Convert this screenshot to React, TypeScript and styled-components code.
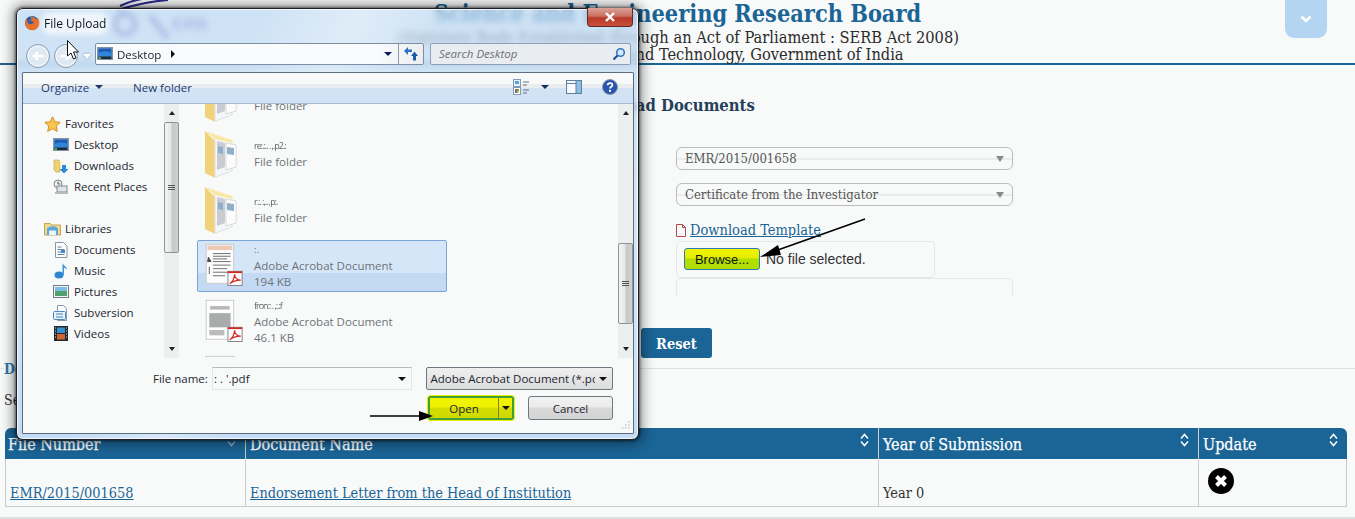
import React from "react";
import styled, { createGlobalStyle } from "styled-components";

const SLAB = `"DejaVu Serif Condensed", "DejaVu Serif", "Liberation Serif", serif`;
const UI = `"Open Sans", "Noto Sans", sans-serif`;
const BLUE = "#1a6496";

const Global = createGlobalStyle`
  html, body { margin: 0; padding: 0; height: 519px; overflow: hidden; background: #f8faf9; }
  * { box-sizing: border-box; }
`;

const Page = styled.div`
  position: relative;
  width: 1355px;
  height: 519px;
  overflow: hidden;
  background: #f8faf9;
  font-family: ${SLAB};
  color: #333;
  border-bottom: 2px solid #dcdfdf;
`;

/* ---------- page header ---------- */
const Header = styled.header`
  height: 65px;
  border-bottom: 2px solid ${BLUE};
  display: grid;
  grid-template-columns: 1fr 600px 1fr;
`;
const LogoSlot = styled.div`
  padding: 0 0 0 112px;
`;
const TitleBlock = styled.div`
  text-align: center;
  white-space: nowrap;
`;
const Title = styled.h1`
  margin: 0;
  font-size: 23.3px;
  line-height: 28px;
  font-weight: 700;
  color: ${BLUE};
`;
const SubLine = styled.div`
  font-size: 16.3px;
  line-height: 17px;
  color: #2b2b2b;
  &:first-of-type { margin-top: 1px; }
`;
const HeaderEnd = styled.div`
  display: flex;
  justify-content: flex-end;
  padding-right: 28px;
`;
const MenuToggle = styled.button`
  width: 42px;
  height: 38px;
  border: 0;
  padding: 0;
  border-radius: 0 0 9px 9px;
  background: #b3d5f2;
  color: #fff;
  display: flex;
  align-items: center;
  justify-content: center;
`;

/* ---------- upload form ---------- */
const UploadSection = styled.section`
  height: 303px;
  padding: 30px 0 0 597px;
`;
const SectionTitle = styled.h2`
  margin: 0;
  font-size: 16.5px;
  line-height: 22px;
  font-weight: 700;
  color: #24405a;
`;
const Fields = styled.div`
  margin: 30px 0 0 79px;
  width: 337px;
  display: flex;
  flex-direction: column;
`;
const FakeSelect = styled.div`
  height: 23px;
  margin-bottom: 13px;
  border: 1px solid #b9bdbd;
  border-radius: 6px;
  padding: 0 8px;
  display: flex;
  align-items: center;
  justify-content: space-between;
  font-size: 13px;
  color: #555;
  background: linear-gradient(to bottom, transparent 10px, #ebeded 10px, #ebeded 12px, transparent 12px);
`;
const Caret = styled.span`
  width: 0;
  height: 0;
  border-left: 4px solid transparent;
  border-right: 4px solid transparent;
  border-top: 6px solid #8a8a8a;
`;
const TemplateRow = styled.div`
  height: 22px;
  display: flex;
  align-items: center;
  gap: 4px;
`;
const TemplateLink = styled.a`
  font-size: 14.5px;
  color: ${BLUE};
  text-decoration: underline;
`;
const FileBox = styled.div`
  width: 259px;
  height: 37px;
  border: 1px solid #e6e8e8;
  border-radius: 5px;
  padding: 0 7px 1px;
  display: flex;
  align-items: center;
  gap: 6px;
  font-family: "Liberation Sans", sans-serif;
  font-size: 14px;
  color: #333;
`;
const BrowseButton = styled.button`
  width: 76px;
  height: 22px;
  padding: 0;
  border: 1px solid #2f7cb5;
  border-radius: 3px;
  background: linear-gradient(to bottom, #f0f300 0, #e3ee00 45%, #b2df00 50%, #b0de00 100%);
  font-family: "Liberation Sans", sans-serif;
  font-size: 13px;
  color: #111;
`;
const ClippedBox = styled.div`
  height: 17px;
  border: 1px solid #e6e8e8;
  border-bottom: 0;
  border-radius: 5px 5px 0 0;
`;
const ButtonRow = styled.div`
  margin: 33px 0 0 44px;
`;
const ResetButton = styled.button`
  width: 71px;
  height: 30px;
  border: 0;
  border-radius: 3px;
  background: ${BLUE};
  color: #fff;
  font-family: ${SLAB};
  font-weight: 700;
  font-size: 14.5px;
`;

/* ---------- documents ---------- */
const DocsSection = styled.section`
  border-top: 1px solid #dfe2e2;
`;
const Legend = styled.h3`
  margin: -8px 0 0 4px;
  padding: 0;
  width: max-content;
  background: #f8faf9;
  font-size: 14px;
  line-height: 16px;
  font-weight: 700;
  color: #2f78b0;
`;
const Hint = styled.p`
  margin: 15px 0 0 4px;
  font-size: 14px;
  line-height: 16px;
  color: #333;
`;
const DocTable = styled.table`
  margin: 20px 0 0 5px;
  width: 1342px;
  border-collapse: separate;
  border-spacing: 0;
  table-layout: fixed;
  font-size: 14.4px;
`;
const Th = styled.th<{ $w: number }>`
  width: ${(p) => p.$w}px;
  height: 31px;
  padding: 1px 5px 0 4px;
  background: ${BLUE};
  color: #fff;
  text-align: left;
  font-weight: 400;
  font-size: 16px;
  -webkit-text-stroke: 0.25px #fff;
  position: relative;
  border-left: 1px solid #c9cccc;
  &:first-child { border-left: 0; border-radius: 6px 0 0 0; padding-left: 3px; }
  &:last-child { border-radius: 0 6px 0 0; }
`;
const SortMark = styled.span`
  position: absolute;
  top: 5px;
  right: 9px;
  display: flex;
`;
const Td = styled.td`
  height: 48px;
  padding: 26px 4px 0;
  vertical-align: top;
  border-left: 1px solid #c9cccc;
  border-bottom: 1px solid #c9cccc;
  &:last-child { border-right: 1px solid #c9cccc; padding: 9px 0 0 9px; }
  a { color: ${BLUE}; text-decoration: underline; }
`;

/* ---------- file dialog ---------- */
const Dialog = styled.div`
  position: absolute;
  left: 16px;
  top: 8px;
  width: 623px;
  height: 432px;
  display: flex;
  flex-direction: column;
  border: 1px solid #1c2026;
  border-radius: 7px;
  font-family: ${UI};
  font-size: 11.5px;
  color: #1c2530;
  backdrop-filter: blur(3px);
  background:
    linear-gradient(115deg, rgba(255,255,255,0) 30%, rgba(255,255,255,.35) 42%, rgba(255,255,255,0) 52%),
    linear-gradient(to bottom, rgba(190,217,243,.72), rgba(205,226,247,.85) 60%, #c3dcf5);
  box-shadow: 0 0 3px 1px rgba(0,0,0,.55), 0 0 12px 4px rgba(0,0,0,.38), inset 0 0 0 1px rgba(255,255,255,.75);
`;
const TitleBar = styled.div`
  height: 32px;
  flex: none;
  padding: 0 5px 0 7px;
  display: flex;
  align-items: flex-start;
`;
const TitleIcon = styled.span`
  margin-top: 6px;
  display: flex;
`;
const TitleText = styled.span`
  margin: 6px 0 0 4px;
  font-size: 12px;
  line-height: 17px;
  color: #10161d;
  background: rgba(255,255,255,.65);
  box-shadow: 0 0 5px 3px rgba(255,255,255,.65);
  border-radius: 8px;
`;
const CloseButton = styled.span`
  margin: -1px 0 0 auto;
  width: 46px;
  height: 19px;
  border: 1px solid #5d2b26;
  border-top: 0;
  border-radius: 0 0 4px 4px;
  background: linear-gradient(to bottom, #dba298 0, #c9705f 45%, #b93a28 55%, #c8503a 100%);
  display: flex;
  align-items: center;
  justify-content: center;
`;
const NavBar = styled.div`
  height: 31px;
  flex: none;
  padding: 2px 7px 0 9px;
  display: flex;
  align-items: flex-start;
`;
const RoundNav = styled.span`
  display: flex;
  margin-right: 4px;
`;
const HistoryCaret = styled.span`
  margin: 11px 4px 0 1px;
  width: 0;
  height: 0;
  border-left: 4px solid transparent;
  border-right: 4px solid transparent;
  border-top: 5px solid #fff;
  filter: drop-shadow(0 0 1px #8095ae);
`;
const AddressBox = styled.div`
  width: 329px;
  height: 22px;
  border: 1px solid #7c8fa6;
  border-radius: 2px;
  background: linear-gradient(to right, #fafbfc 0, #fafbfc 85%, #eceef0 100%);
  display: flex;
  align-items: center;
  padding-left: 1px;
  color: #16202c;
`;
const AddressLabel = styled.span`
  margin: 0 0 0 4px;
`;
const Crumb = styled.span`
  margin-left: 10px;
  width: 0;
  height: 0;
  border-top: 4px solid transparent;
  border-bottom: 4px solid transparent;
  border-left: 4px solid #111;
`;
const AddressEnd = styled.span`
  margin-left: auto;
  height: 100%;
  display: flex;
  align-items: center;
`;
const DownCaret = styled.span<{ $c?: string }>`
  width: 0;
  height: 0;
  border-left: 4px solid transparent;
  border-right: 4px solid transparent;
  border-top: 4px solid ${(p) => p.$c || "#0a1c5c"};
`;
const RefreshCell = styled.span`
  margin-left: 6px;
  width: 25px;
  height: 100%;
  border-left: 1px solid #8a9bb0;
  display: flex;
  align-items: center;
  justify-content: center;
`;
const SearchBox = styled.div`
  width: 201px;
  height: 22px;
  margin-left: 6px;
  border: 1px solid #8da0b7;
  border-radius: 2px;
  background: #e9edf1;
  display: flex;
  align-items: center;
  justify-content: space-between;
  padding: 0 4px 1px 8px;
  font-style: italic;
  color: #6b7178;
`;
const Panel = styled.div`
  flex: 1;
  min-height: 0;
  margin: 0 4px 5px 5px;
  border: 1px solid #5d6d80;
  border-radius: 1px;
  background: #f8faf9;
  display: flex;
  flex-direction: column;
  position: relative;
`;
const Toolbar = styled.div`
  height: 31px;
  flex: none;
  padding: 0 15px 2px 18px;
  display: flex;
  align-items: center;
  color: #1d3a6c;
  border-bottom: 1px solid #a8b8d0;
  background: linear-gradient(to bottom, #f8faf9 0, #f8faf9 11px, #e9edf0 11px, #e9edf0 15px, #d2e3f6 15px);
`;
const OrganizeLabel = styled.span`
  display: flex;
  align-items: center;
  gap: 6px;
  margin-right: 30px;
`;
const ToolIcons = styled.span`
  margin-left: auto;
  display: flex;
  align-items: center;
`;
const ToolGap = styled.span<{ $w: number }>`
  width: ${(p) => p.$w}px;
  flex: none;
`;
const Panes = styled.div`
  height: 254px;
  flex: none;
  display: flex;
`;
const NavPane = styled.div`
  width: 141px;
  flex: none;
  padding-top: 9px;
  overflow: hidden;
`;
const NavGroup = styled.div<{ $spaced?: boolean }>`
  height: 21px;
  margin-top: ${(p) => (p.$spaced ? "21px" : "0")};
  padding-left: 20px;
  display: flex;
  align-items: center;
  gap: 4px;
`;
const NavItem = styled.div`
  height: 21px;
  padding-left: 29px;
  display: flex;
  align-items: center;
  gap: 4px;
`;
const Scrollbar = styled.div`
  width: 15px;
  flex: none;
  background: #ecefef;
  position: relative;
  display: flex;
  flex-direction: column;
  align-items: center;
`;
const ScrollCap = styled.span<{ $down?: boolean }>`
  height: 18px;
  flex: none;
  display: flex;
  align-items: center;
  &::after {
    content: "";
    width: 0;
    height: 0;
    border-left: 3.5px solid transparent;
    border-right: 3.5px solid transparent;
    ${(p) => (p.$down ? "border-top: 4px solid #222;" : "border-bottom: 4px solid #222;")}
  }
`;
const ScrollTrack = styled.span`
  flex: 1;
  width: 100%;
  position: relative;
`;
const ScrollThumb = styled.span<{ $top: number; $h: number }>`
  position: absolute;
  left: 0;
  top: ${(p) => p.$top}px;
  height: ${(p) => p.$h}px;
  width: 15px;
  border: 1px solid #8f9497;
  border-radius: 2px;
  background: linear-gradient(to right, #f3f4f4, #e6e7e7 45%, #c6c9c8 55%, #cfd1d0);
  display: flex;
  flex-direction: column;
  align-items: center;
  justify-content: center;
  gap: 1px;
  i { width: 7px; height: 1px; background: #555; }
`;
const FilePane = styled.div`
  flex: 1;
  min-width: 0;
  padding-left: 18px;
  overflow: hidden;
`;
const FileList = styled.div`
  margin-top: -32px;
  display: flex;
  flex-direction: column;
  gap: 4px;
`;
const FileRow = styled.div<{ $sel?: boolean }>`
  width: 250px;
  height: 52px;
  flex: none;
  display: flex;
  align-items: center;
  padding-left: 6px;
  gap: 11px;
  border: 1px solid ${(p) => (p.$sel ? "#78a6d6" : "transparent")};
  border-radius: 2px;
  background: ${(p) =>
    p.$sel ? "linear-gradient(to bottom, #d6e6f9 0, #d6e6f9 65%, #c4daf4 65%, #c4daf4 100%)" : "transparent"};
`;
const FileThumb = styled.span`
  width: 39px;
  flex: none;
  display: flex;
`;
const FileText = styled.div`
  line-height: 16px;
  color: #6d7378;
  white-space: nowrap;
`;
const FileName = styled.div`
  color: #2a2f36;
  letter-spacing: -1px;
  font-size: 9px;
  opacity: .75;
`;
const Footer = styled.div`
  flex: 1;
  padding: 9px 20px 0 130px;
  display: flex;
  flex-direction: column;
  gap: 6px;
`;
const FooterRow = styled.div`
  display: flex;
  align-items: center;
`;
const NameLabel = styled.span`
  width: 60px;
  flex: none;
`;
const NameInput = styled.div`
  width: 202px;
  height: 23px;
  border: 1px solid #e4e7e8;
  border-top-color: #b6bbbd;
  display: flex;
  align-items: center;
  justify-content: space-between;
  padding: 0 5px 0 1px;
  margin-left: -1px;
`;
const TypeSelect = styled.div`
  width: 188px;
  height: 23px;
  margin-left: 14px;
  border: 1px solid #6f7780;
  border-radius: 2px;
  background: linear-gradient(to bottom, #efefef, #dcdcdc);
  display: flex;
  align-items: center;
  justify-content: space-between;
  padding: 0 5px 0 3px;
  white-space: nowrap;
  overflow: hidden;
`;
const TypeText = styled.span`
  width: 165px;
  overflow: hidden;
`;
const ActionRow = styled.div`
  display: flex;
  justify-content: flex-end;
  gap: 14px;
`;
const OpenButton = styled.span`
  width: 86px;
  height: 24px;
  border: 2px solid #3fa03a;
  outline: 1px solid #eef200;
  border-radius: 2px;
  background: linear-gradient(to bottom, #f2f500 0, #eef200 45%, #d3dd00 50%, #d0da00 100%);
  display: flex;
  align-items: center;
`;
const OpenLabel = styled.span`
  flex: 1;
  text-align: center;
`;
const OpenArrow = styled.span`
  width: 14px;
  height: 100%;
  border-left: 1px solid #8e7a18;
  display: flex;
  align-items: center;
  justify-content: center;
`;
const CancelButton = styled.span`
  width: 85px;
  height: 24px;
  border: 1px solid #6f7780;
  border-radius: 3px;
  background: linear-gradient(to bottom, #f2f2f2 0, #ebebeb 45%, #d9d9d9 50%, #d4d4d4 100%);
  display: flex;
  align-items: center;
  justify-content: center;
`;
const Grip = styled.span`
  position: absolute;
  right: 2px;
  bottom: 2px;
  display: flex;
`;
const Overlay = styled.svg`
  position: absolute;
  left: 0;
  top: 0;
  pointer-events: none;
`;
const IconCell = styled.span`
  width: 18px;
  flex: none;
  display: flex;
  justify-content: center;
`;

/* ---------- drawn icons ---------- */
const Firefox = () => (
  <svg width="16" height="16" viewBox="0 0 16 16">
    <circle cx="8" cy="8" r="7" fill="#2f5da6" />
    <path d="M3 2.500C1 5 .6 9 2.400 12c2 3.400 6.600 4 9.600 2.200 3-1.800 4.200-5.600 3-9-.4-1.200-1-2.200-2-3 .5 1.300.5 2.300.2 3C12 3.600 10 2 8 1.400c.8 1.400.4 2.300-.7 3-1 .2-1.400.8-1.600 1.600 1.300-.4 2.400 0 3.600.7C10.500 7.500 8 10 5.500 9 4 8.400 3.200 7 3 5.500 2.800 4.500 2.800 3.500 3 2.500Z" fill="#e8702a" />
    <path d="M6 1.200c1.200.5 1.600 1.300 1.300 2.800C8.200 3 8 2 7 1.200Z" fill="#f5c23d" />
  </svg>
);
const NavCircle = ({ forward }: { forward?: boolean }) => (
  <svg width="24" height="26" viewBox="0 0 24 26">
    <circle cx="12" cy="13" r="11.500" fill="#dfe9f3" stroke="#8b9cac" />
    <circle cx="12" cy="13" r="10" fill="none" stroke="#f6f9fc" />
    <path d={forward ? "M6 13h9M12 9l4 4-4 4" : "M18 13H9M12 9l-4 4 4 4"} fill="none" stroke="#fff" strokeWidth="2.400" />
  </svg>
);
const DesktopIcon = () => (
  <svg width="16" height="14" viewBox="0 0 16 14">
    <rect x=".5" y=".5" width="15" height="12" fill="#7e9cc0" stroke="#7f92aa" />
    <rect x="1.500" y="1.500" width="13" height="8" fill="#1d5cb5" />
    <path d="M1.500 6c4-2 9-2 13 0v3.500h-13Z" fill="#2f87d9" />
    <rect x="1.500" y="9.500" width="13" height="2.500" fill="#202a38" />
    <rect x="2" y="10" width="2" height="2" fill="#3fb04a" />
  </svg>
);
const Refresh = () => (
  <svg width="16" height="16" viewBox="0 0 16 16">
    <path d="M1 5l4-4v2.500h4V6H5v3Z" fill="#2b70c4" />
    <path d="M15 10l-3.500-4.500L8 10h2v4.500h3V10Z" fill="#1c5cab" />
  </svg>
);
const Magnifier = () => (
  <svg width="14" height="14" viewBox="0 0 14 14">
    <circle cx="8.500" cy="5.500" r="3.800" fill="#d9e9f8" stroke="#2b78c8" strokeWidth="1.600" />
    <path d="M5.500 8.500L1.500 12.500" stroke="#1d4f96" strokeWidth="2.200" />
  </svg>
);
const ViewsIcon = () => (
  <svg width="18" height="16" viewBox="0 0 18 16">
    <rect x=".5" y=".5" width="7" height="7" fill="#e6f2fb" stroke="#7f9ab6" />
    <rect x="2" y="2" width="4" height="3" fill="#5fa0d8" />
    <rect x=".5" y="8.500" width="7" height="7" fill="#fff" stroke="#7f9ab6" />
    <rect x="2" y="10" width="2" height="2" fill="#d8482c" />
    <rect x="4" y="10" width="2" height="2" fill="#54b04a" />
    <rect x="2" y="12" width="2" height="2" fill="#3a78c8" />
    <rect x="4" y="12" width="2" height="2" fill="#e8c030" />
    <path d="M10 3h6M10 6h4M10 11h6M10 14h4" stroke="#60707f" />
  </svg>
);
const PaneIcon = () => (
  <svg width="16" height="14" viewBox="0 0 16 14">
    <rect x=".5" y=".5" width="15" height="13" fill="#f8fbfd" stroke="#60809e" />
    <rect x="10" y="1" width="5" height="12" fill="#8cbde4" />
    <path d="M1 3.500h9M10 1v12" stroke="#60809e" />
  </svg>
);
const HelpIcon = () => (
  <svg width="16" height="16" viewBox="0 0 16 16">
    <circle cx="8" cy="8" r="7.500" fill="#2a55ad" stroke="#8a97a8" />
    <path d="M5.600 6.200C5.800 3.400 10.400 3.400 10.400 6c0 1.800-2.400 1.800-2.400 3.600" fill="none" stroke="#fff" strokeWidth="1.800" />
    <rect x="7" y="10.800" width="2" height="2" fill="#fff" />
  </svg>
);
const Star = () => (
  <svg width="17" height="16" viewBox="0 0 17 16">
    <path d="M8.500.800l2.300 5 5.400.6-4 3.700 1.100 5.300-4.800-2.700-4.800 2.700 1.100-5.300-4-3.700 5.400-.6Z" fill="#f9c64d" stroke="#d98a2b" />
  </svg>
);
const DownloadsIcon = () => (
  <svg width="16" height="16" viewBox="0 0 16 16">
    <path d="M1 2h5l1 2v10H3L1 12Z" fill="#f0d272" stroke="#bfa050" strokeWidth=".6" />
    <path d="M7 3h3v6H7Z" fill="#fdf3c8" />
    <path d="M9 7h4v4h2.500L11 15.500 6.500 11H9Z" fill="#2e8ad8" />
  </svg>
);
const RecentIcon = () => (
  <svg width="16" height="16" viewBox="0 0 16 16">
    <circle cx="5" cy="5" r="4" fill="#eef1f3" stroke="#7d8589" />
    <path d="M5 2.500V5h2.200" fill="none" stroke="#555" />
    <rect x="4" y="7" width="10" height="6" fill="#dfe4e7" stroke="#80888c" />
    <rect x="2" y="13" width="13" height="2" fill="#b5babd" />
  </svg>
);
const LibraryIcon = () => (
  <svg width="17" height="15" viewBox="0 0 17 15">
    <path d="M.5 2.500h6l1 1.500h9v10H.5Z" fill="#f2d88a" stroke="#c6a55b" />
    <path d="M3 7.500c3-3 8-3 11 0V14H3Z" fill="#59a7dd" />
    <rect x="5" y="9.500" width="7" height="4.500" fill="#e8f4fb" />
  </svg>
);
const DocIcon = () => (
  <svg width="14" height="16" viewBox="0 0 14 16">
    <path d="M1.500.500h8l3.500 3.500v11.500H1.500Z" fill="#fbfcfd" stroke="#8a95a3" />
    <path d="M3.500 5h4M3.500 7.500h7M3.500 10h7M3.500 12.500h7" stroke="#6c84a4" />
    <rect x="7" y="8" width="4" height="3" fill="#3f8ad0" />
  </svg>
);
const MusicIcon = () => (
  <svg width="14" height="17" viewBox="0 0 14 17">
    <ellipse cx="5" cy="13" rx="4.500" ry="3.500" fill="#2e84cf" />
    <path d="M8.500 13V1c.5 2.500 4.500 3 4.500 7-.8-1.500-2.500-2.200-3-2.200V13Z" fill="#3f95dd" />
  </svg>
);
const PictureIcon = () => (
  <svg width="16" height="13" viewBox="0 0 16 13">
    <rect x=".5" y=".5" width="15" height="12" fill="#f2f5f7" stroke="#6f7c88" />
    <rect x="2" y="2" width="12" height="4" fill="#7cc0e8" />
    <rect x="2" y="6" width="12" height="5" fill="#4fa06b" />
  </svg>
);
const SvnIcon = () => (
  <svg width="16" height="16" viewBox="0 0 16 16">
    <path d="M4.500.500h6L13.500 3.500V15.500H4.500Z" fill="#f8fafb" stroke="#8a9aac" />
    <rect x=".5" y="6.500" width="12" height="8" rx="1" fill="#e6f1fa" stroke="#4f87bb" />
    <path d="M3 9h7M3 12h7" stroke="#4f87bb" />
  </svg>
);
const VideoIcon = () => (
  <svg width="14" height="15" viewBox="0 0 14 15">
    <rect width="14" height="15" fill="#1d2b35" />
    <rect x="3" y="1.500" width="8" height="5.500" fill="#3590cf" />
    <rect x="3" y="8" width="8" height="5.500" fill="#d2652d" />
    <path d="M1 2h1M1 5h1M1 8h1M1 11h1M12 2h1M12 5h1M12 8h1M12 11h1" stroke="#cfd6da" />
  </svg>
);
const Folder = () => (
  <svg width="34" height="50" viewBox="0 0 34 50">
    <path d="M1 2v42l10 5V12Z" fill="#f1d27a" />
    <path d="M11 8l17 4v30l-17 6Z" fill="#f5f6f7" stroke="#dfe2e4" />
    <path d="M13 12l8 2v24l-8 3Z" fill="#c9ccd0" />
    <path d="M22 14l10 2v22l-10 3Z" fill="#fdfdfd" stroke="#d8dadc" />
    <path d="M1 2l27 9v3L11 10Z" fill="#fae9a6" />
    <path d="M23 18l7 1v7l-7-1Z" fill="#8fb0c7" />
    <path d="M14 17l5 1v7l-5-1Z" fill="#8fb0c7" />
  </svg>
);
const PdfBadge = () => (
  <>
    <rect x="27" y="31" width="16" height="16" fill="#fdfdfd" stroke="#787878" />
    <rect x="27" y="31" width="16" height="2" fill="#cf2a22" />
    <path d="M29 45c3-1.500 5-6 5.500-10.500.5 4 3 6.500 7 6.500-4 .2-9 1.300-12.500 4Z" fill="none" stroke="#cf2a22" strokeWidth="1.300" />
  </>
);
const PdfThumb = ({ plain }: { plain?: boolean }) => (
  <svg width="44" height="50" viewBox="0 0 44 50">
    <rect x="2.500" y=".5" width="31" height="44" fill="#fdfdfd" stroke="#c4c7c9" />
    {plain ? (
      <>
        <rect x="7" y="7" width="22" height="4" fill="#b6b8ba" />
        <rect x="6" y="15" width="24" height="16" fill="#a9abad" />
        <rect x="6" y="34" width="17" height="6" fill="#b9bbbd" />
      </>
    ) : (
      <>
        <rect x="4" y="2" width="28" height="5" fill="#eec9b4" />
        <path d="M10 11h20M10 14h20M10 17h16M10 20h20M10 24h20M10 28h16M10 32h18M10 36h14" stroke="#5c5f62" />
        <path d="M5 15l3 5H4Z M6 26v8" stroke="#44484c" fill="#44484c" />
      </>
    )}
    <PdfBadge />
  </svg>
);
const SortIcon = ({ muted }: { muted?: boolean }) => (
  <svg width="9" height="14" viewBox="0 0 9 14">
    <path d="M1 5.500l3.500-4 3.500 4M1 8.500l3.500 4 3.500-4" fill="none" stroke={muted ? "#8ca6ba" : "#fff"} strokeWidth="1.500" />
  </svg>
);

const NAV_TOP = [
  ["Desktop", <DesktopIcon key="d" />],
  ["Downloads", <DownloadsIcon key="dl" />],
  ["Recent Places", <RecentIcon key="r" />],
] as const;
const NAV_LIB = [
  ["Documents", <DocIcon key="d" />],
  ["Music", <MusicIcon key="m" />],
  ["Pictures", <PictureIcon key="p" />],
  ["Subversion", <SvnIcon key="s" />],
  ["Videos", <VideoIcon key="v" />],
] as const;

export default function App() {
  return (
    <Page>
      <Global />
      <Header>
        <LogoSlot>
          <svg width="130" height="50" viewBox="0 0 130 50">
            <path d="M8 6C20 0 38 -4 62 -2" fill="none" stroke="#2a2a8c" strokeWidth="2" />
            <path d="M6 10C22 5 40 1 56 0" fill="none" stroke="#2a2a8c" strokeWidth="2" />
            <circle cx="13" cy="24" r="10" fill="none" stroke="#5a55b5" strokeWidth="4" />
            <path d="M38 16L56 38" stroke="#6a5fc0" strokeWidth="5" />
            <text x="60" y="30" fontFamily="Liberation Sans" fontWeight="700" fontSize="17" fill="#7a6ac8">ERB</text>
          </svg>
        </LogoSlot>
        <TitleBlock>
          <Title>Science and Engineering Research Board</Title>
          <SubLine>(Statutory Body Established through an Act of Parliament : SERB Act 2008)</SubLine>
          <SubLine>Department of Science and Technology, Government of India</SubLine>
        </TitleBlock>
        <HeaderEnd>
          <MenuToggle aria-label="Menu">
            <svg width="12" height="9" viewBox="0 0 12 9">
              <path d="M1.500 1.500L6 6l4.500-4.500" fill="none" stroke="#fff" strokeWidth="2.600" />
            </svg>
          </MenuToggle>
        </HeaderEnd>
      </Header>

      <UploadSection>
        <SectionTitle>Upload Documents</SectionTitle>
        <Fields>
          <FakeSelect>EMR/2015/001658<Caret /></FakeSelect>
          <FakeSelect>Certificate from the Investigator<Caret /></FakeSelect>
          <TemplateRow>
            <svg width="10" height="13" viewBox="0 0 10 13">
              <path d="M.5.500h6l3 3v9h-9Z M6.500.500v3h3" fill="none" stroke="#b9454a" />
            </svg>
            <TemplateLink>Download Template</TemplateLink>
          </TemplateRow>
          <FileBox>
            <BrowseButton>Browse...</BrowseButton>
            No file selected.
          </FileBox>
          <ClippedBox />
        </Fields>
        <ButtonRow>
          <ResetButton>Reset</ResetButton>
        </ButtonRow>
      </UploadSection>

      <DocsSection>
        <Legend>Documents</Legend>
        <Hint>Select</Hint>
        <DocTable>
          <thead>
            <tr>
              <Th $w={240}>File Number<SortMark><SortIcon muted /></SortMark></Th>
              <Th $w={633}>Document Name<SortMark><SortIcon /></SortMark></Th>
              <Th $w={320}>Year of Submission<SortMark><SortIcon /></SortMark></Th>
              <Th $w={149}>Update<SortMark><SortIcon /></SortMark></Th>
            </tr>
          </thead>
          <tbody>
            <tr>
              <Td><a>EMR/2015/001658</a></Td>
              <Td><a>Endorsement Letter from the Head of Institution</a></Td>
              <Td>Year 0</Td>
              <Td>
                <svg width="26" height="26" viewBox="0 0 26 26">
                  <circle cx="13" cy="13" r="13" fill="#000" />
                  <path d="M8.500 8.500l9 9M17.500 8.500l-9 9" stroke="#fff" strokeWidth="4" />
                </svg>
              </Td>
            </tr>
          </tbody>
        </DocTable>
      </DocsSection>

      <Dialog>
        <TitleBar>
          <TitleIcon><Firefox /></TitleIcon>
          <TitleText>File Upload</TitleText>
          <CloseButton>
            <svg width="12" height="10" viewBox="0 0 12 10">
              <path d="M2 1l8 8M10 1l-8 8" stroke="#fff" strokeWidth="2.400" />
            </svg>
          </CloseButton>
        </TitleBar>
        <NavBar>
          <RoundNav><NavCircle /></RoundNav>
          <RoundNav><NavCircle forward /></RoundNav>
          <HistoryCaret />
          <AddressBox>
            <DesktopIcon />
            <AddressLabel>Desktop</AddressLabel>
            <Crumb />
            <AddressEnd>
              <DownCaret />
              <RefreshCell><Refresh /></RefreshCell>
            </AddressEnd>
          </AddressBox>
          <SearchBox>Search Desktop<Magnifier /></SearchBox>
        </NavBar>
        <Panel>
          <Toolbar>
            <OrganizeLabel>Organize <DownCaret $c="#1d3a6c" /></OrganizeLabel>
            <span>New folder</span>
            <ToolIcons>
              <ViewsIcon />
              <ToolGap $w={10} />
              <DownCaret $c="#12305c" />
              <ToolGap $w={17} />
              <PaneIcon />
              <ToolGap $w={20} />
              <HelpIcon />
            </ToolIcons>
          </Toolbar>
          <Panes>
            <NavPane>
              <NavGroup><IconCell><Star /></IconCell>Favorites</NavGroup>
              {NAV_TOP.map(([label, icon]) => (
                <NavItem key={label}><IconCell>{icon}</IconCell>{label}</NavItem>
              ))}
              <NavGroup $spaced><IconCell><LibraryIcon /></IconCell>Libraries</NavGroup>
              {NAV_LIB.map(([label, icon]) => (
                <NavItem key={label}><IconCell>{icon}</IconCell>{label}</NavItem>
              ))}
            </NavPane>
            <Scrollbar>
              <ScrollCap />
              <ScrollTrack>
                <ScrollThumb $top={0} $h={131}><i /><i /><i /></ScrollThumb>
              </ScrollTrack>
              <ScrollCap $down />
            </Scrollbar>
            <FilePane>
              <FileList>
                <FileRow><FileThumb><Folder /></FileThumb><FileText><FileName>rc:.:.. ,.:p</FileName>File folder</FileText></FileRow>
                <FileRow><FileThumb><Folder /></FileThumb><FileText><FileName>re:.:.. . ,.p2.:</FileName>File folder</FileText></FileRow>
                <FileRow><FileThumb><Folder /></FileThumb><FileText><FileName>r.:. :,.. ,p:.</FileName>File folder</FileText></FileRow>
                <FileRow $sel><FileThumb><PdfThumb /></FileThumb><FileText><FileName>: .</FileName>Adobe Acrobat Document<br />194 KB</FileText></FileRow>
                <FileRow><FileThumb><PdfThumb plain /></FileThumb><FileText><FileName>fron:: . ,:.:f</FileName>Adobe Acrobat Document<br />46.1 KB</FileText></FileRow>
                <FileRow><FileThumb><PdfThumb plain /></FileThumb><FileText><FileName>Brief On Form Recom:.:.df</FileName>Adobe Acrobat Document<br />52.0 KB</FileText></FileRow>
              </FileList>
            </FilePane>
            <Scrollbar>
              <ScrollCap />
              <ScrollTrack>
                <ScrollThumb $top={121} $h={81}><i /><i /><i /></ScrollThumb>
              </ScrollTrack>
              <ScrollCap $down />
            </Scrollbar>
          </Panes>
          <Footer>
            <FooterRow>
              <NameLabel>File name:</NameLabel>
              <NameInput><span>: . '.pdf</span><DownCaret $c="#111" /></NameInput>
              <TypeSelect><TypeText>Adobe Acrobat Document (*.pdf)</TypeText><DownCaret $c="#111" /></TypeSelect>
            </FooterRow>
            <ActionRow>
              <OpenButton>
                <OpenLabel>Open</OpenLabel>
                <OpenArrow><DownCaret $c="#111" /></OpenArrow>
              </OpenButton>
              <CancelButton>Cancel</CancelButton>
            </ActionRow>
          </Footer>
          <Grip>
            <svg width="10" height="10" viewBox="0 0 10 10">
              <path d="M7 1h1.500M4 4h1.500M7 4h1.500M1 7h1.500M4 7h1.500M7 7h1.500" stroke="#a8aeb3" />
            </svg>
          </Grip>
        </Panel>
      </Dialog>

      <Overlay width="1355" height="519" viewBox="0 0 1355 519">
        <path d="M865 219L775 251" stroke="#000" strokeWidth="1.600" />
        <path d="M760 257L778 245L781 255Z" fill="#000" />
        <path d="M370 416H424" stroke="#000" strokeWidth="1.600" />
        <path d="M419 411L433 416L419 421Z" fill="#000" />
        <path d="M67.500 40.500V56L71 53l2.500 6 2.500-1-2.500-6h5Z" fill="#fff" stroke="#111" />
      </Overlay>
    </Page>
  );
}
